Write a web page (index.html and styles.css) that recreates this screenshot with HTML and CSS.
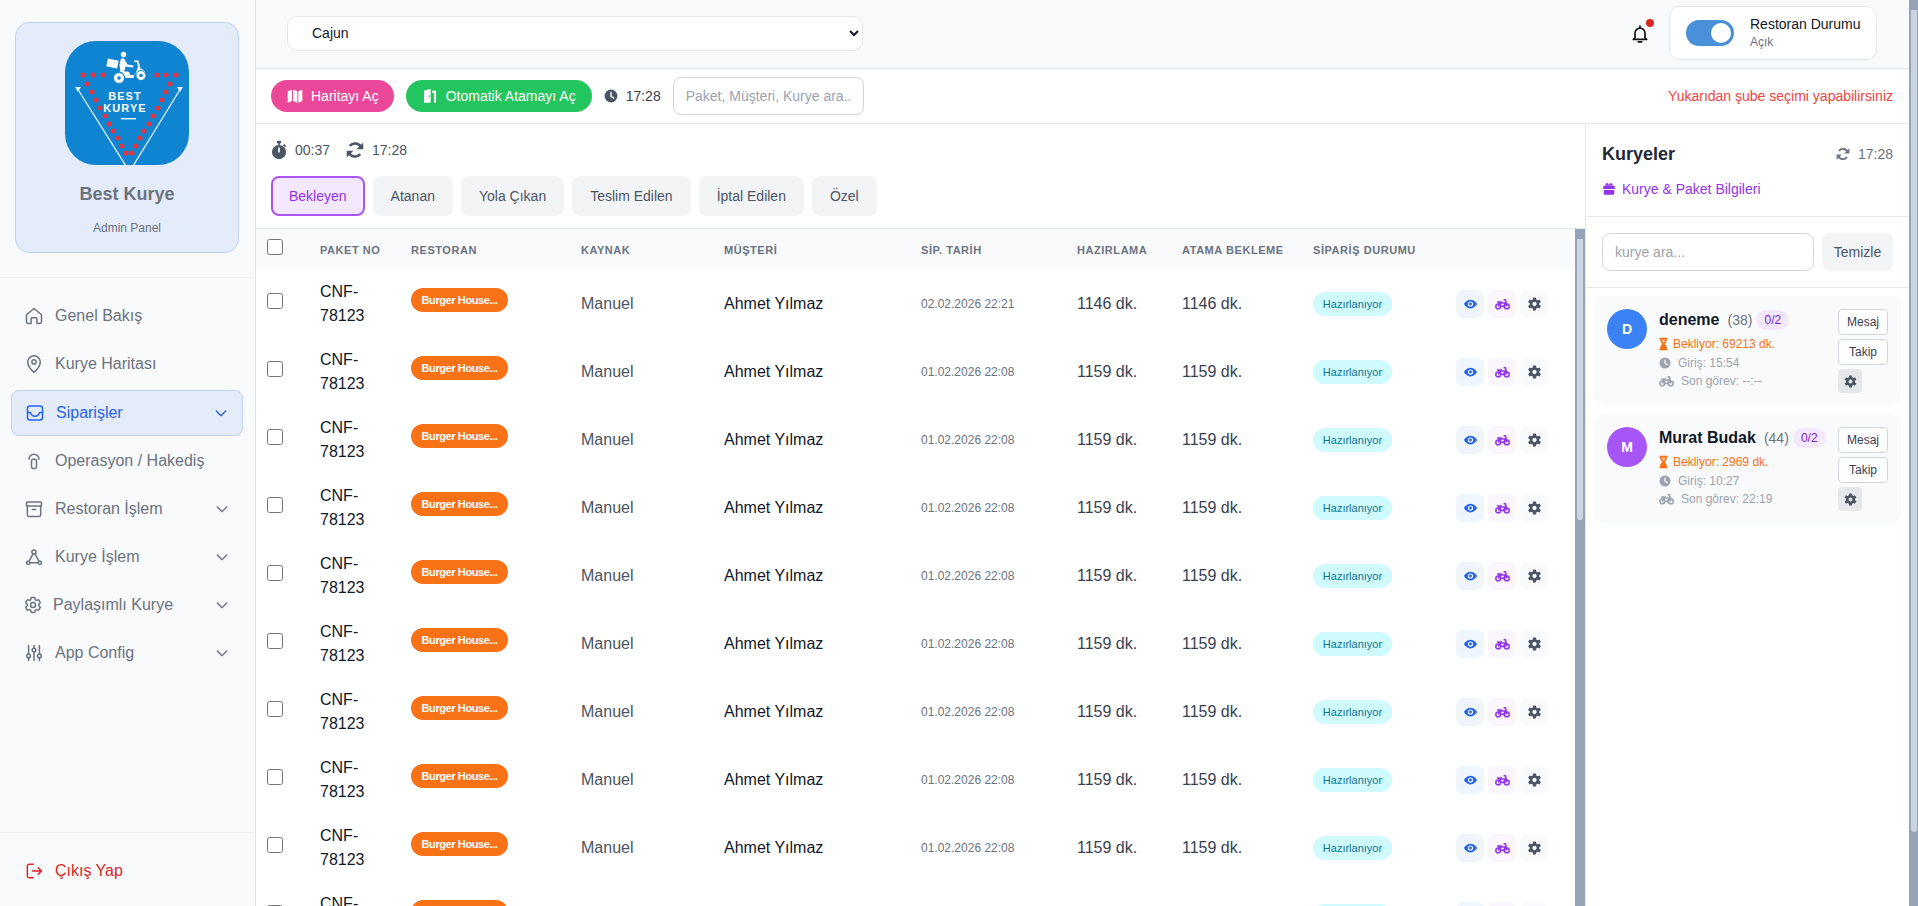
FILE: index.html
```html
<!DOCTYPE html>
<html lang="tr">
<head>
    <meta charset="UTF-8">
    <meta name="viewport" content="width=device-width, initial-scale=1.0">
    <title>Best Kurye - Admin Panel</title>
    <link rel="stylesheet" href="styles.css">
</head>
<body>
    <svg class="icon-defs" aria-hidden="true">
        <symbol id="i-chevron" viewBox="0 0 24 24"><path d="M5 9l7 7 7-7" fill="none" stroke="currentColor" stroke-width="2" stroke-linecap="round" stroke-linejoin="round"/></symbol>
        <symbol id="i-clock" viewBox="0 0 24 24"><circle cx="12" cy="12" r="11" fill="currentColor"/><path d="M12 6v6.500l4.500 3" fill="none" stroke="#fff" stroke-width="2.400" stroke-linecap="round"/></symbol>
        <symbol id="i-sync" viewBox="0 0 24 24"><g fill="none" stroke="currentColor" stroke-width="3.400"><path d="M20.500 9.500A9 9 0 0 0 5 6.500"/><path d="M3.500 14.500A9 9 0 0 0 19 17.500"/></g><path d="M23 2v9h-9zM1 22v-9h9z" fill="currentColor"/></symbol>
        <symbol id="i-eye" viewBox="0 0 24 24"><path fill="currentColor" fill-rule="evenodd" d="M12 4.500C6 4.500 2 9.500 .8 12c1.200 2.500 5.200 7.500 11.200 7.500s10-5 11.200-7.500C22 9.500 18 4.500 12 4.500zM12 7.500a4.500 4.500 0 1 0 0 9a4.500 4.500 0 1 0 0-9zM12 9.500a2.500 2.500 0 1 1 0 5a2.500 2.500 0 1 1 0-5z"/></symbol>
        <symbol id="i-bike" viewBox="0 0 28 22"><g fill="none" stroke="currentColor"><circle cx="6" cy="15.500" r="4.500" stroke-width="2.800"/><circle cx="22" cy="15.500" r="4.500" stroke-width="2.800"/><path d="M6 15.500L11 9h7l4 6.500M16 3h3.500l2.500 12.500M11 15.500h5L20 8" stroke-width="3"/></g><path d="M3.500 6h10l-2 4.500H6z" fill="currentColor"/></symbol>
        <symbol id="i-gear" viewBox="0 0 24 24"><circle cx="12" cy="12" r="6" fill="none" stroke="currentColor" stroke-width="4.600"/><g fill="currentColor"><rect x="9.300" y=".8" width="5.400" height="5" rx="1"/><rect x="9.300" y=".8" width="5.400" height="5" rx="1" transform="rotate(60 12 12)"/><rect x="9.300" y=".8" width="5.400" height="5" rx="1" transform="rotate(120 12 12)"/><rect x="9.300" y=".8" width="5.400" height="5" rx="1" transform="rotate(180 12 12)"/><rect x="9.300" y=".8" width="5.400" height="5" rx="1" transform="rotate(240 12 12)"/><rect x="9.300" y=".8" width="5.400" height="5" rx="1" transform="rotate(300 12 12)"/></g></symbol>
        <symbol id="i-hourglass" viewBox="0 0 16 24"><path fill="currentColor" d="M1 1h14v3h-1c0 4-2 6-4 8 2 2 4 4 4 8h1v3H1v-3h1c0-4 2-6 4-8-2-2-4-4-4-8H1z"/><path fill="#fff" d="M4.500 4h7c0 2-1.500 4-3.500 6-2-2-3.500-4-3.500-6z" opacity=".55"/></symbol>
    </svg>

    <aside class="sidebar">
        <div class="brand">
            <div class="brand-card">
                <svg class="brand-logo" viewBox="0 0 124 124">
                    <rect width="124" height="124" rx="31" fill="#0f84d0"/>
                    <path d="M12 47l49 78M116 47l-48 78" fill="none" stroke="#e6f2fb" stroke-width="1.300"/>
                    <path d="M10 46h6l-3 5zM118 46h-6l3 5z" fill="#e6f2fb"/>
                    <g fill="#e8323f">
                        <circle cx="18" cy="34" r="2.500"/><circle cx="28" cy="34" r="2.500"/><circle cx="38" cy="34" r="2.500"/>
                        <circle cx="92" cy="34" r="2.500"/><circle cx="101" cy="34" r="2.500"/><circle cx="111" cy="34" r="2.500"/>
                        <circle cx="22" cy="43" r="2.500"/><circle cx="27" cy="51" r="2.500"/><circle cx="31" cy="59" r="2.500"/><circle cx="35" cy="67" r="2.500"/><circle cx="40" cy="75" r="2.500"/>
                        <circle cx="44" cy="83" r="2.500"/><circle cx="48" cy="90" r="2.500"/><circle cx="53" cy="97" r="2.500"/><circle cx="57" cy="105" r="2.500"/><circle cx="61" cy="112" r="2.500"/>
                        <circle cx="67" cy="112" r="2.500"/><circle cx="71" cy="105" r="2.500"/><circle cx="75" cy="97" r="2.500"/><circle cx="79" cy="90" r="2.500"/><circle cx="84" cy="83" r="2.500"/>
                        <circle cx="88" cy="75" r="2.500"/><circle cx="93" cy="67" r="2.500"/><circle cx="97" cy="59" r="2.500"/><circle cx="101" cy="51" r="2.500"/><circle cx="105" cy="43" r="2.500"/>
                    </g>
                    <!-- scooter -->
                    <g fill="#fff">
                        <rect x="42" y="18.500" width="11" height="8" transform="rotate(12 47.500 22.500)"/>
                        <circle cx="58.500" cy="13.500" r="2.700"/>
                        <path d="M56 17.500h3l3.500 6 6 1-.5 2-7.500-1-1.500 5.500-3.500 0-1-7z"/>
                        <path d="M46 30.500h16c2 0 3 1.500 3 3.500h5l3-8-1-5h-3v-1.500h4.500l2 8c2.500 .5 4.500 2.500 5 5H70l-1.500 4.500H60c0-4-3-7-7-6.500l-6 0z"/>
                    </g>
                    <g fill="#fff" stroke="#0f84d0" stroke-width="1">
                        <circle cx="54" cy="37" r="5.500"/>
                        <circle cx="76" cy="34.500" r="5"/>
                    </g>
                    <circle cx="54" cy="37" r="1.800" fill="#0f84d0"/>
                    <circle cx="76" cy="34.500" r="1.800" fill="#0f84d0"/>
                    <text class="brand-logo-text" x="60" y="59">BEST</text>
                    <text class="brand-logo-text" x="60" y="71">KURYE</text>
                    <rect x="56" y="77" width="15" height="1.400" fill="#fff"/>
                </svg>
                <div class="brand-name">Best Kurye</div>
                <div class="brand-sub">Admin Panel</div>
            </div>
        </div>

        <nav class="nav">
            <a class="nav-item">
                <svg class="nav-icon" viewBox="0 0 24 24"><path d="M3 10.500L12 3l9 7.500V19a2 2 0 0 1-2 2h-3.500v-6a1 1 0 0 0-1-1h-5a1 1 0 0 0-1 1v6H5a2 2 0 0 1-2-2z"/></svg>
                <span>Genel Bakış</span>
            </a>
            <a class="nav-item">
                <svg class="nav-icon" viewBox="0 0 24 24"><path d="M12 22s7.500-6.500 7.500-12.500a7.500 7.500 0 0 0-15 0C4.500 15.500 12 22 12 22z"/><circle cx="12" cy="9.500" r="2.500"/></svg>
                <span>Kurye Haritası</span>
            </a>
            <a class="nav-item active">
                <svg class="nav-icon" viewBox="0 0 24 24"><rect x="3" y="3.500" width="18" height="17" rx="3"/><path d="M3 11.500h3.500c1 3 3 4.500 5.500 4.500s4.500-1.500 5.500-4.500H21"/></svg>
                <span>Siparişler</span>
                <svg class="nav-chevron"><use href="#i-chevron"/></svg>
            </a>
            <a class="nav-item">
                <svg class="nav-icon" viewBox="0 0 24 24"><path d="M6 10a6 6 0 0 1 12 0"/><rect x="9" y="10" width="6" height="11" rx="2"/></svg>
                <span>Operasyon / Hakediş</span>
            </a>
            <a class="nav-item">
                <svg class="nav-icon" viewBox="0 0 24 24"><rect x="3" y="3.500" width="18" height="5" rx="1"/><path d="M4 8.500V19a2 2 0 0 0 2 2h12a2 2 0 0 0 2-2V8.500M10 12.500h4"/></svg>
                <span>Restoran İşlem</span>
                <svg class="nav-chevron"><use href="#i-chevron"/></svg>
            </a>
            <a class="nav-item">
                <svg class="nav-icon" viewBox="0 0 24 24"><circle cx="12" cy="6" r="2.500"/><circle cx="5" cy="19" r="2"/><circle cx="19" cy="19" r="2"/><path d="M10.800 8.200L6 17.200M13.200 8.200l4.800 9M7 19h10"/></svg>
                <span>Kurye İşlem</span>
                <svg class="nav-chevron"><use href="#i-chevron"/></svg>
            </a>
            <a class="nav-item shared">
                <svg class="nav-icon" viewBox="0 0 24 24"><path d="M9.594 3.940c.09-.542.56-.94 1.110-.94h2.593c.55 0 1.020.398 1.110.94l.213 1.281c.063.374.313.686.645.870.074.04.147.083.22.127.325.196.72.257 1.075.124l1.217-.456a1.125 1.125 0 0 1 1.370.49l1.296 2.247a1.125 1.125 0 0 1-.26 1.431l-1.003.827c-.293.241-.438.613-.43.992a7.723 7.723 0 0 1 0 .255c-.008.378.137.75.43.991l1.004.827c.424.35.534.955.26 1.430l-1.298 2.247a1.125 1.125 0 0 1-1.369.491l-1.217-.456c-.355-.133-.75-.072-1.076.124a6.470 6.470 0 0 1-.22.128c-.331.183-.581.495-.644.869l-.213 1.281c-.09.543-.56.94-1.110.94h-2.594c-.55 0-1.019-.398-1.110-.94l-.213-1.281c-.062-.374-.312-.686-.644-.87a6.520 6.520 0 0 1-.22-.127c-.325-.196-.72-.257-1.076-.124l-1.217.456a1.125 1.125 0 0 1-1.369-.49l-1.297-2.247a1.125 1.125 0 0 1 .26-1.431l1.004-.827c.292-.24.437-.613.43-.991a6.932 6.932 0 0 1 0-.255c.007-.38-.138-.751-.43-.992l-1.004-.827a1.125 1.125 0 0 1-.26-1.430l1.297-2.247a1.125 1.125 0 0 1 1.370-.491l1.216.456c.356.133.751.072 1.076-.124.072-.044.146-.086.22-.128.332-.183.582-.495.644-.869l.214-1.280z"/><circle cx="12" cy="12" r="3"/></svg>
                <span>Paylaşımlı Kurye</span>
                <svg class="nav-chevron"><use href="#i-chevron"/></svg>
            </a>
            <a class="nav-item">
                <svg class="nav-icon" viewBox="0 0 24 24"><path d="M5.500 3v10M5.500 18v3M12 3v3M12 11v10M18.500 3v10M18.500 18v3"/><circle cx="5.500" cy="15.500" r="2.200"/><circle cx="12" cy="8.500" r="2.200"/><circle cx="18.500" cy="15.500" r="2.200"/></svg>
                <span>App Config</span>
                <svg class="nav-chevron"><use href="#i-chevron"/></svg>
            </a>
        </nav>

        <div class="sidebar-footer">
            <a class="nav-item logout">
                <svg class="nav-icon" viewBox="0 0 24 24"><path d="M11 4H6a2 2 0 0 0-2 2v12a2 2 0 0 0 2 2h5M10 12h11M17 8l4 4-4 4"/></svg>
                <span>Çıkış Yap</span>
            </a>
        </div>
    </aside>

    <div class="page">
        <header class="topbar">
            <select class="branch-select">
                <option>Cajun</option>
            </select>
            <div class="topbar-right">
                <div class="bell">
                    <svg class="bell-icon" viewBox="0 0 24 24"><path d="M6 16.500V11a6 6 0 0 1 12 0v5.500l2 2H4zM10 21.500h4M12 2.500V5"/></svg>
                    <span class="bell-dot"></span>
                </div>
                <div class="status-card">
                    <span class="toggle"><span class="toggle-knob"></span></span>
                    <div class="status-text">
                        <div class="status-title">Restoran Durumu</div>
                        <div class="status-sub">Açık</div>
                    </div>
                </div>
            </div>
        </header>

        <div class="toolbar">
            <button class="pill-btn pink">
                <svg class="pill-icon" viewBox="0 0 24 24"><path fill="currentColor" d="M1 5l6.500-2.500v17L1 22zM9 2.500l6.500 2.500v17L9 19.500zM17 5l6-2.500V19.500L17 22z"/></svg>
                Haritayı Aç
            </button>
            <button class="pill-btn green">
                <svg class="pill-icon" viewBox="0 0 24 24"><path fill="currentColor" fill-rule="evenodd" d="M3 22V4l10-3v21zM10 11h1.500v2.500H10zM15 4h6v18h-3V7h-3z"/></svg>
                Otomatik Atamayı Aç
            </button>
            <span class="clock-now">
                <svg class="small-icon"><use href="#i-clock"/></svg>
                17:28
            </span>
            <input class="search-input toolbar-search" type="text" placeholder="Paket, Müşteri, Kurye ara..">
            <span class="branch-hint">Yukarıdan şube seçimi yapabilirsiniz</span>
        </div>

        <div class="content">
            <section class="orders">
                <div class="orders-head">
                    <div class="timers">
                        <span class="timer">
                            <svg class="stopwatch-icon" viewBox="3 0 18 24"><circle cx="12" cy="14.500" r="8.500" fill="currentColor"/><rect x="9.500" y="1" width="5" height="3" rx=".8" fill="currentColor"/><rect x="11" y="3" width="2" height="3" fill="currentColor"/><path d="M17.500 5.500l2.500 2.500" stroke="currentColor" stroke-width="2.200"/><path d="M12 9v6" stroke="#fff" stroke-width="2"/></svg>
                            00:37
                        </span>
                        <span class="timer">
                            <svg class="sync-icon"><use href="#i-sync"/></svg>
                            17:28
                        </span>
                    </div>
                    <div class="tabs">
                        <button class="tab active">Bekleyen</button>
                        <button class="tab">Atanan</button>
                        <button class="tab">Yola Çıkan</button>
                        <button class="tab">Teslim Edilen</button>
                        <button class="tab">İptal Edilen</button>
                        <button class="tab">Özel</button>
                    </div>
                </div>

                <div class="table-area">
                    <div class="table-wrap">
                        <table class="orders-table">
                            <colgroup>
                                <col class="col-check"><col class="col-no"><col class="col-rest"><col class="col-source"><col class="col-customer">
                                <col class="col-date"><col class="col-prep"><col class="col-wait"><col class="col-status"><col class="col-actions">
                            </colgroup>
                            <thead>
                                <tr>
                                    <th><input type="checkbox" class="check"></th>
                                    <th>PAKET NO</th>
                                    <th>RESTORAN</th>
                                    <th>KAYNAK</th>
                                    <th>MÜŞTERİ</th>
                                    <th>SİP. TARİH</th>
                                    <th>HAZIRLAMA</th>
                                    <th>ATAMA BEKLEME</th>
                                    <th>SİPARİŞ DURUMU</th>
                                    <th></th>
                                </tr>
                            </thead>
                            <tbody>
                                <tr>
                                    <td><input type="checkbox" class="check"></td>
                                    <td class="cell-no">CNF-78123</td>
                                    <td><span class="rest-badge">Burger House...</span></td>
                                    <td class="cell-source">Manuel</td>
                                    <td class="cell-customer">Ahmet Yılmaz</td>
                                    <td class="cell-date">02.02.2026 22:21</td>
                                    <td class="cell-time">1146 dk.</td>
                                    <td class="cell-time">1146 dk.</td>
                                    <td><span class="status-badge">Hazırlanıyor</span></td>
                                    <td><div class="row-actions"><button class="act blue"><svg><use href="#i-eye"/></svg></button><button class="act purple"><svg><use href="#i-bike"/></svg></button><button class="act gray"><svg><use href="#i-gear"/></svg></button></div></td>
                                </tr>
                                <tr>
                                    <td><input type="checkbox" class="check"></td>
                                    <td class="cell-no">CNF-78123</td>
                                    <td><span class="rest-badge">Burger House...</span></td>
                                    <td class="cell-source">Manuel</td>
                                    <td class="cell-customer">Ahmet Yılmaz</td>
                                    <td class="cell-date">01.02.2026 22:08</td>
                                    <td class="cell-time">1159 dk.</td>
                                    <td class="cell-time">1159 dk.</td>
                                    <td><span class="status-badge">Hazırlanıyor</span></td>
                                    <td><div class="row-actions"><button class="act blue"><svg><use href="#i-eye"/></svg></button><button class="act purple"><svg><use href="#i-bike"/></svg></button><button class="act gray"><svg><use href="#i-gear"/></svg></button></div></td>
                                </tr>
                                <tr>
                                    <td><input type="checkbox" class="check"></td>
                                    <td class="cell-no">CNF-78123</td>
                                    <td><span class="rest-badge">Burger House...</span></td>
                                    <td class="cell-source">Manuel</td>
                                    <td class="cell-customer">Ahmet Yılmaz</td>
                                    <td class="cell-date">01.02.2026 22:08</td>
                                    <td class="cell-time">1159 dk.</td>
                                    <td class="cell-time">1159 dk.</td>
                                    <td><span class="status-badge">Hazırlanıyor</span></td>
                                    <td><div class="row-actions"><button class="act blue"><svg><use href="#i-eye"/></svg></button><button class="act purple"><svg><use href="#i-bike"/></svg></button><button class="act gray"><svg><use href="#i-gear"/></svg></button></div></td>
                                </tr>
                                <tr>
                                    <td><input type="checkbox" class="check"></td>
                                    <td class="cell-no">CNF-78123</td>
                                    <td><span class="rest-badge">Burger House...</span></td>
                                    <td class="cell-source">Manuel</td>
                                    <td class="cell-customer">Ahmet Yılmaz</td>
                                    <td class="cell-date">01.02.2026 22:08</td>
                                    <td class="cell-time">1159 dk.</td>
                                    <td class="cell-time">1159 dk.</td>
                                    <td><span class="status-badge">Hazırlanıyor</span></td>
                                    <td><div class="row-actions"><button class="act blue"><svg><use href="#i-eye"/></svg></button><button class="act purple"><svg><use href="#i-bike"/></svg></button><button class="act gray"><svg><use href="#i-gear"/></svg></button></div></td>
                                </tr>
                                <tr>
                                    <td><input type="checkbox" class="check"></td>
                                    <td class="cell-no">CNF-78123</td>
                                    <td><span class="rest-badge">Burger House...</span></td>
                                    <td class="cell-source">Manuel</td>
                                    <td class="cell-customer">Ahmet Yılmaz</td>
                                    <td class="cell-date">01.02.2026 22:08</td>
                                    <td class="cell-time">1159 dk.</td>
                                    <td class="cell-time">1159 dk.</td>
                                    <td><span class="status-badge">Hazırlanıyor</span></td>
                                    <td><div class="row-actions"><button class="act blue"><svg><use href="#i-eye"/></svg></button><button class="act purple"><svg><use href="#i-bike"/></svg></button><button class="act gray"><svg><use href="#i-gear"/></svg></button></div></td>
                                </tr>
                                <tr>
                                    <td><input type="checkbox" class="check"></td>
                                    <td class="cell-no">CNF-78123</td>
                                    <td><span class="rest-badge">Burger House...</span></td>
                                    <td class="cell-source">Manuel</td>
                                    <td class="cell-customer">Ahmet Yılmaz</td>
                                    <td class="cell-date">01.02.2026 22:08</td>
                                    <td class="cell-time">1159 dk.</td>
                                    <td class="cell-time">1159 dk.</td>
                                    <td><span class="status-badge">Hazırlanıyor</span></td>
                                    <td><div class="row-actions"><button class="act blue"><svg><use href="#i-eye"/></svg></button><button class="act purple"><svg><use href="#i-bike"/></svg></button><button class="act gray"><svg><use href="#i-gear"/></svg></button></div></td>
                                </tr>
                                <tr>
                                    <td><input type="checkbox" class="check"></td>
                                    <td class="cell-no">CNF-78123</td>
                                    <td><span class="rest-badge">Burger House...</span></td>
                                    <td class="cell-source">Manuel</td>
                                    <td class="cell-customer">Ahmet Yılmaz</td>
                                    <td class="cell-date">01.02.2026 22:08</td>
                                    <td class="cell-time">1159 dk.</td>
                                    <td class="cell-time">1159 dk.</td>
                                    <td><span class="status-badge">Hazırlanıyor</span></td>
                                    <td><div class="row-actions"><button class="act blue"><svg><use href="#i-eye"/></svg></button><button class="act purple"><svg><use href="#i-bike"/></svg></button><button class="act gray"><svg><use href="#i-gear"/></svg></button></div></td>
                                </tr>
                                <tr>
                                    <td><input type="checkbox" class="check"></td>
                                    <td class="cell-no">CNF-78123</td>
                                    <td><span class="rest-badge">Burger House...</span></td>
                                    <td class="cell-source">Manuel</td>
                                    <td class="cell-customer">Ahmet Yılmaz</td>
                                    <td class="cell-date">01.02.2026 22:08</td>
                                    <td class="cell-time">1159 dk.</td>
                                    <td class="cell-time">1159 dk.</td>
                                    <td><span class="status-badge">Hazırlanıyor</span></td>
                                    <td><div class="row-actions"><button class="act blue"><svg><use href="#i-eye"/></svg></button><button class="act purple"><svg><use href="#i-bike"/></svg></button><button class="act gray"><svg><use href="#i-gear"/></svg></button></div></td>
                                </tr>
                                <tr>
                                    <td><input type="checkbox" class="check"></td>
                                    <td class="cell-no">CNF-78123</td>
                                    <td><span class="rest-badge">Burger House...</span></td>
                                    <td class="cell-source">Manuel</td>
                                    <td class="cell-customer">Ahmet Yılmaz</td>
                                    <td class="cell-date">01.02.2026 22:08</td>
                                    <td class="cell-time">1159 dk.</td>
                                    <td class="cell-time">1159 dk.</td>
                                    <td><span class="status-badge">Hazırlanıyor</span></td>
                                    <td><div class="row-actions"><button class="act blue"><svg><use href="#i-eye"/></svg></button><button class="act purple"><svg><use href="#i-bike"/></svg></button><button class="act gray"><svg><use href="#i-gear"/></svg></button></div></td>
                                </tr>
                                <tr>
                                    <td><input type="checkbox" class="check"></td>
                                    <td class="cell-no">CNF-78123</td>
                                    <td><span class="rest-badge">Burger House...</span></td>
                                    <td class="cell-source">Manuel</td>
                                    <td class="cell-customer">Ahmet Yılmaz</td>
                                    <td class="cell-date">01.02.2026 22:08</td>
                                    <td class="cell-time">1159 dk.</td>
                                    <td class="cell-time">1159 dk.</td>
                                    <td><span class="status-badge">Hazırlanıyor</span></td>
                                    <td><div class="row-actions"><button class="act blue"><svg><use href="#i-eye"/></svg></button><button class="act purple"><svg><use href="#i-bike"/></svg></button><button class="act gray"><svg><use href="#i-gear"/></svg></button></div></td>
                                </tr>
                            </tbody>
                        </table>
                    </div>
                    <div class="scroll-track table-scroll"><span class="scroll-thumb"></span></div>
                </div>
            </section>

            <aside class="couriers">
                <div class="couriers-head">
                    <div class="couriers-title-row">
                        <h2 class="couriers-title">Kuryeler</h2>
                        <span class="couriers-time">
                            <svg class="small-icon"><use href="#i-sync"/></svg>
                            17:28
                        </span>
                    </div>
                    <a class="couriers-link">
                        <svg class="link-icon" viewBox="0 0 24 24"><path fill="currentColor" d="M2 8a1.500 1.500 0 0 1 1.500-1.500h17A1.500 1.500 0 0 1 22 8v4H2zM3 13.500h18V20a2 2 0 0 1-2 2H5a2 2 0 0 1-2-2zM7 2h3.500L12 5l1.500-3H17l1.500 3-1 1H6.500l-1-1z"/></svg>
                        Kurye &amp; Paket Bilgileri
                    </a>
                </div>
                <div class="couriers-search">
                    <input class="search-input" type="text" placeholder="kurye ara...">
                    <button class="clear-btn">Temizle</button>
                </div>
                <div class="courier-list">
                    <div class="courier-card">
                        <div class="avatar blue-avatar">D</div>
                        <div class="courier-info">
                            <div class="courier-name-row">
                                <span class="courier-name">deneme</span>
                                <span class="courier-count">(38)</span>
                                <span class="courier-load">0/2</span>
                            </div>
                            <div class="courier-line waiting"><svg class="line-hourglass"><use href="#i-hourglass"/></svg>Bekliyor: 69213 dk.</div>
                            <div class="courier-line"><svg class="line-clock"><use href="#i-clock"/></svg>Giriş: 15:54</div>
                            <div class="courier-line"><svg class="line-bike"><use href="#i-bike"/></svg>Son görev: --:--</div>
                        </div>
                        <div class="courier-actions">
                            <button class="courier-btn">Mesaj</button>
                            <button class="courier-btn">Takip</button>
                            <button class="courier-gear"><svg><use href="#i-gear"/></svg></button>
                        </div>
                    </div>
                    <div class="courier-card">
                        <div class="avatar purple-avatar">M</div>
                        <div class="courier-info">
                            <div class="courier-name-row">
                                <span class="courier-name">Murat Budak</span>
                                <span class="courier-count">(44)</span>
                                <span class="courier-load">0/2</span>
                            </div>
                            <div class="courier-line waiting"><svg class="line-hourglass"><use href="#i-hourglass"/></svg>Bekliyor: 2969 dk.</div>
                            <div class="courier-line"><svg class="line-clock"><use href="#i-clock"/></svg>Giriş: 10:27</div>
                            <div class="courier-line"><svg class="line-bike"><use href="#i-bike"/></svg>Son görev: 22:19</div>
                        </div>
                        <div class="courier-actions">
                            <button class="courier-btn">Mesaj</button>
                            <button class="courier-btn">Takip</button>
                            <button class="courier-gear"><svg><use href="#i-gear"/></svg></button>
                        </div>
                    </div>
                </div>
            </aside>
        </div>
    </div>

    <div class="scroll-track page-scroll"><span class="scroll-thumb"></span></div>
</body>
</html>
```

FILE: styles.css
```css
* {
    margin: 0;
    padding: 0;
    box-sizing: border-box;
}

html, body {
    height: 100%;
    overflow: hidden;
}

body {
    display: flex;
    font-family: "Liberation Sans", Arial, sans-serif;
    font-size: 14px;
    color: #111827;
    background: white;
}

button, input, select {
    font-family: inherit;
}

.icon-defs {
    position: absolute;
    width: 0;
    height: 0;
}

/* sidebar */
.sidebar {
    flex: 0 0 256px;
    display: flex;
    flex-direction: column;
    height: 100%;
    background: #f9fafb;
    border-right: 1px solid #e5e7eb;
}

.brand {
    padding: 22px 16px 24px 15px;
    border-bottom: 1px solid #f0f1f4;
}

.brand-card {
    height: 231px;
    padding-top: 18px;
    text-align: center;
    background: #e4ebf9;
    border: 1px solid #bfd4f6;
    border-radius: 14px;
}

.brand-logo {
    display: block;
    width: 124px;
    height: 124px;
    margin: 0 auto;
}

.brand-logo-text {
    font-size: 11px;
    font-weight: 700;
    letter-spacing: 1.1px;
    text-anchor: middle;
    fill: white;
}

.brand-name {
    margin-top: 17px;
    font-size: 18px;
    font-weight: 700;
    line-height: 24px;
    color: #6b7280;
}

.brand-sub {
    margin-top: 14px;
    font-size: 12px;
    line-height: 16px;
    color: #6b7280;
}

.nav {
    display: flex;
    flex-direction: column;
    gap: 2px;
    padding: 15px 12px 0 11px;
}

.nav-item {
    display: flex;
    align-items: center;
    gap: 11px;
    height: 46px;
    padding: 0 13px 0 13px;
    font-size: 16px;
    color: #6b7280;
    border-radius: 8px;
}

.nav-item.active {
    margin-top: 1px;
    color: #2563eb;
    background: #e4ebf9;
    border: 1px solid #bfd4f6;
}

.nav-item.shared {
    gap: 10px;
}

.nav-item.shared .nav-icon {
    margin-left: -1px;
}

.nav-icon {
    flex: none;
    width: 20px;
    height: 20px;
    fill: none;
    stroke: currentColor;
    stroke-width: 1.8;
    stroke-linecap: round;
    stroke-linejoin: round;
}

.nav-chevron {
    flex: none;
    width: 16px;
    height: 16px;
    margin-left: auto;
}

.sidebar-footer {
    margin-top: auto;
    height: 74px;
    padding: 15px 12px 0 11px;
    border-top: 1px solid #f0f1f4;
}

.logout {
    color: #dc2626;
}

/* top */
.page {
    flex: 1;
    min-width: 0;
    display: flex;
    flex-direction: column;
}

.topbar {
    flex: 0 0 69px;
    display: flex;
    align-items: center;
    justify-content: space-between;
    padding: 0 32px 2px 31px;
    background: #f9fafb;
    border-bottom: 1px solid #e5e7eb;
}

.branch-select {
    width: 576px;
    height: 35px;
    padding: 0 20px;
    font-size: 14px;
    color: #111827;
    background-color: white;
    border: 1px solid #e5e7eb;
    border-radius: 10px;
}

.topbar-right {
    display: flex;
    align-items: center;
    gap: 19px;
}

.bell {
    position: relative;
    width: 20px;
    height: 24px;
    padding-top: 3px;
}

.bell-icon {
    display: block;
    width: 20px;
    height: 20px;
    fill: none;
    stroke: #111;
    stroke-width: 2;
    stroke-linejoin: round;
    stroke-linecap: round;
}

.bell-dot {
    position: absolute;
    top: -2px;
    right: -4px;
    width: 8px;
    height: 8px;
    background: #dc2626;
    border-radius: 50%;
}

.status-card {
    display: flex;
    align-items: center;
    gap: 16px;
    width: 208px;
    height: 54px;
    padding: 0 16px;
    background: white;
    border: 1px solid #e5e7eb;
    border-radius: 10px;
}

.toggle {
    flex: none;
    display: flex;
    align-items: center;
    justify-content: flex-end;
    width: 48px;
    height: 26px;
    padding: 3px;
    background: #4a90d9;
    border-radius: 13px;
}

.toggle-knob {
    width: 20px;
    height: 20px;
    background: white;
    border-radius: 50%;
}

.status-text {
    white-space: nowrap;
}

.status-title {
    font-size: 14px;
    line-height: 18px;
    color: #111827;
}

.status-sub {
    font-size: 12px;
    line-height: 18px;
    color: #6b7280;
}

.toolbar {
    flex: 0 0 55px;
    display: flex;
    align-items: center;
    padding: 0 16px 0 15px;
    border-bottom: 1px solid #e5e7eb;
}

.pill-btn {
    display: flex;
    align-items: center;
    gap: 8px;
    height: 32px;
    padding: 0 15px 0 16px;
    font-size: 14px;
    color: white;
    border: none;
    border-radius: 16px;
}

.pill-btn.pink {
    background: #ec4899;
}

.pill-btn.green {
    margin-left: 12px;
    padding-right: 16px;
    background: #22c55e;
}

.pill-icon {
    width: 16px;
    height: 16px;
}

.clock-now {
    display: flex;
    align-items: center;
    gap: 8px;
    margin-left: 12px;
    color: #374151;
}

.small-icon {
    width: 14px;
    height: 14px;
    color: #4b5563;
}

.search-input {
    height: 38px;
    padding: 0 12px;
    font-size: 14px;
    color: #111827;
    background: white;
    border: 1px solid #d1d5db;
    border-radius: 8px;
    outline: none;
}

.search-input::placeholder {
    color: #9ca3af;
}

.toolbar-search {
    width: 191px;
    margin-left: 12px;
}

.branch-hint {
    margin-left: auto;
    font-size: 14px;
    color: #ef4444;
}

/* orders */
.content {
    flex: 1;
    min-height: 0;
    display: flex;
}

.orders {
    flex: 1;
    min-width: 0;
    display: flex;
    flex-direction: column;
}

.orders-head {
    padding: 16px 15px 12px;
    border-bottom: 1px solid #e5e7eb;
}

.timers {
    display: flex;
    gap: 16px;
    height: 20px;
    margin-bottom: 16px;
}

.timer {
    display: flex;
    align-items: center;
    gap: 8px;
    font-size: 14px;
    color: #4b5563;
}

.stopwatch-icon {
    width: 16px;
    height: 20px;
    color: #4b5563;
}

.sync-icon {
    width: 18px;
    height: 18px;
    color: #4b5563;
}

.tabs {
    display: flex;
    gap: 8px;
}

.tab {
    height: 40px;
    padding: 0 16px;
    font-size: 14px;
    color: #4b5563;
    background: #f3f4f6;
    border: 2px solid transparent;
    border-radius: 8px;
}

.tab.active {
    color: #9333ea;
    background: #f3e8ff;
    border-color: #a855f7;
}

.table-area {
    flex: 1;
    min-height: 0;
    display: flex;
}

.table-wrap {
    flex: 1;
    min-width: 0;
    overflow: hidden;
}

.orders-table {
    width: 1319px;
    table-layout: fixed;
    border-collapse: collapse;
}

.col-check { width: 64px; }
.col-no { width: 91px; }
.col-rest { width: 170px; }
.col-source { width: 143px; }
.col-customer { width: 197px; }
.col-date { width: 156px; }
.col-prep { width: 105px; }
.col-wait { width: 131px; }
.col-status { width: 143px; }
.col-actions { width: 119px; }

.orders-table th {
    height: 41px;
    font-size: 11px;
    font-weight: 700;
    letter-spacing: .55px;
    text-align: left;
    white-space: nowrap;
    color: #6b7280;
    background: #f9fafb;
}

.orders-table td {
    height: 68px;
    font-size: 16px;
    line-height: 24px;
    vertical-align: middle;
}

.orders-table th:first-child, .orders-table td:first-child {
    padding-left: 11px;
}

.check {
    display: block;
    width: 16px;
    height: 16px;
    margin-bottom: 6px;
}

.orders-table .cell-no {
    padding-right: 26px;
    color: #111827;
}

.cell-source {
    color: #4b5563;
}

.cell-customer {
    color: #111827;
}

.orders-table .cell-date {
    font-size: 12px;
    color: #6b7280;
}

.cell-time {
    color: #374151;
}

.rest-badge {
    display: block;
    width: 97px;
    height: 24px;
    margin-bottom: 8px;
    font-size: 11px;
    font-weight: 700;
    letter-spacing: -.4px;
    line-height: 24px;
    text-align: center;
    white-space: nowrap;
    color: white;
    background: #f97316;
    border-radius: 12px;
}

.status-badge {
    display: block;
    width: 79px;
    height: 24px;
    font-size: 11px;
    line-height: 24px;
    text-align: center;
    color: #0e7490;
    background: #cffafe;
    border-radius: 12px;
}

.row-actions {
    display: flex;
    gap: 4px;
}

.act {
    display: flex;
    align-items: center;
    justify-content: center;
    width: 28px;
    height: 28px;
    border: none;
    border-radius: 8px;
}

.act svg {
    width: 15px;
    height: 14px;
}

.act.blue {
    color: #2563eb;
    background: #eff6ff;
}

.act.purple {
    color: #9333ea;
    background: #faf5ff;
}

.act.gray {
    color: #4b5563;
    background: #f9fafb;
}

/* scrollbars */
.scroll-track {
    display: block;
    background: #94a3b8;
}

.scroll-thumb {
    display: block;
    background: #cbd5e1;
    border-radius: 0 0 3px 3px;
}

.table-scroll {
    flex: 0 0 10px;
    padding: 10px 2px 0;
}

.table-scroll .scroll-thumb {
    height: 281px;
}

.page-scroll {
    flex: 0 0 9px;
    padding: 10px 1.5px 0;
}

.page-scroll .scroll-thumb {
    height: 822px;
}

/* couriers */
.couriers {
    flex: 0 0 324px;
    border-left: 1px solid #e5e7eb;
}

.couriers-head {
    height: 93px;
    padding: 16px 16px 0;
    border-bottom: 1px solid #e5e7eb;
}

.couriers-title-row {
    display: flex;
    align-items: center;
    justify-content: space-between;
    height: 28px;
    margin-bottom: 11px;
}

.couriers-title {
    font-size: 18px;
    font-weight: 700;
    color: #1f2937;
}

.couriers-time {
    display: flex;
    align-items: center;
    gap: 8px;
    color: #6b7280;
}

.couriers-time .small-icon {
    color: #6b7280;
}

.couriers-link {
    display: flex;
    align-items: center;
    gap: 6px;
    height: 20px;
    font-size: 14px;
    color: #9333ea;
}

.link-icon {
    width: 14px;
    height: 14px;
}

.couriers-search {
    display: flex;
    gap: 8px;
    padding: 16px;
    border-bottom: 1px solid #e5e7eb;
}

.couriers-search .search-input {
    flex: 1;
    min-width: 0;
}

.clear-btn {
    width: 71px;
    font-size: 14px;
    color: #4b5563;
    background: #f3f4f6;
    border: none;
    border-radius: 8px;
}

.courier-list {
    display: flex;
    flex-direction: column;
    gap: 8px;
    padding: 8px;
}

.courier-card {
    display: flex;
    gap: 12px;
    height: 110px;
    padding: 13px;
    background: #f9fafb;
    border-radius: 12px;
}

.avatar {
    flex: none;
    width: 40px;
    height: 40px;
    font-size: 14px;
    font-weight: 700;
    line-height: 40px;
    text-align: center;
    color: white;
    border-radius: 50%;
}

.blue-avatar {
    background: #3b82f6;
}

.purple-avatar {
    background: #a855f7;
}

.courier-info {
    flex: 1;
    min-width: 0;
}

.courier-name-row {
    display: flex;
    align-items: center;
    gap: 8px;
    height: 22px;
    margin-bottom: 4px;
    white-space: nowrap;
}

.courier-name {
    font-size: 16px;
    font-weight: 700;
    color: #111827;
}

.courier-count {
    width: 21px;
    font-size: 14px;
    color: #6b7280;
}

.courier-load {
    flex: none;
    height: 20px;
    padding: 0 8px;
    font-size: 12px;
    line-height: 20px;
    color: #7e22ce;
    background: #f3e8ff;
    border-radius: 10px;
}

.courier-line {
    display: flex;
    align-items: center;
    gap: 7px;
    height: 18.5px;
    font-size: 12px;
    color: #9ca3af;
}

.courier-line.waiting {
    gap: 5px;
    color: #f97316;
}

.line-hourglass {
    width: 9px;
    height: 14px;
}

.line-clock {
    width: 12px;
    height: 12px;
}

.line-bike {
    width: 15px;
    height: 12px;
}

.courier-actions {
    flex: 0 0 50px;
    display: flex;
    flex-direction: column;
    gap: 4px;
}

.courier-btn {
    height: 26px;
    font-size: 12px;
    color: #374151;
    background: white;
    border: 1px solid #d1d5db;
    border-radius: 4px;
}

.courier-gear {
    display: flex;
    align-items: center;
    justify-content: center;
    width: 24px;
    height: 24px;
    color: #4b5563;
    background: #e5e7eb;
    border: none;
    border-radius: 4px;
}

.courier-gear svg {
    width: 13px;
    height: 13px;
}
```
